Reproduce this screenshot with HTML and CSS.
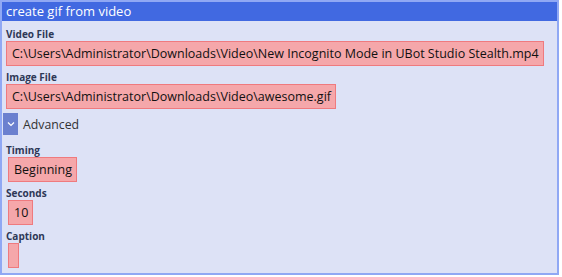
FILE: index.html
```html
<!DOCTYPE html>
<html lang="en">
<head>
  <meta charset="UTF-8">
  <title>create gif from video</title>
  <link rel="stylesheet" href="styles.css">
</head>
<body>
  <div class="panel">
    <div class="title">create gif from video</div>
    <div class="content">
      <div class="field">
        <div class="label">Video File</div>
        <div class="box">C:\Users\Administrator\Downloads\Video\New Incognito Mode in UBot Studio Stealth.mp4</div>
      </div>
      <div class="field">
        <div class="label">Image File</div>
        <div class="box">C:\Users\Administrator\Downloads\Video\awesome.gif</div>
      </div>
      <div class="advanced">
        <span class="toggle">
          <svg width="8" height="6" viewBox="0 0 8 6"><path d="M1 1.5 L4 4.5 L7 1.5" fill="none" stroke="#fff" stroke-width="1.2"/></svg>
        </span>
        <span class="adv-text">Advanced</span>
      </div>
      <div class="sub">
        <div class="field">
          <div class="label">Timing</div>
          <div class="box">Beginning</div>
        </div>
        <div class="field">
          <div class="label">Seconds</div>
          <div class="box">10</div>
        </div>
        <div class="field">
          <div class="label">Caption</div>
          <div class="box empty"></div>
        </div>
      </div>
    </div>
  </div>
</body>
</html>
```
FILE: styles.css
```css
body { margin: 0; font-family: "Open Sans", sans-serif; }
.panel { width: 555px; height: 271px; border: 2px solid #90a8f4; background: #dde2f6; }
.title { height: 19px; background: #4169e1; color: #fff; font-size: 13px; line-height: 19px; padding-left: 4px; white-space: nowrap; }
.content { padding: 2px 0 0 3px; }
.field { display: flex; flex-direction: column; align-items: flex-start; }
.label { height: 18px; line-height: 22px; font-size: 10px; font-weight: bold; color: #2e3856; padding-left: 1px; white-space: nowrap; }
.box { height: 23px; line-height: 23px; padding: 0 4px 0 5px; background: #f5a7aa; border: 1px solid #ef7a7e; font-size: 12.5px; color: #111; margin-left: 1px; white-space: nowrap; }
.box.empty { width: 0; }
.advanced { display: flex; align-items: center; margin-top: 4px; margin-left: -2px; height: 22px; }
.toggle { width: 15px; height: 22px; background: #6b80cf; display: flex; align-items: center; justify-content: center; }
.adv-text { margin-left: 5px; font-size: 12.3px; color: #333; }
.sub { margin-top: 4px; }
.sub .box { margin-left: 3px; }
```
